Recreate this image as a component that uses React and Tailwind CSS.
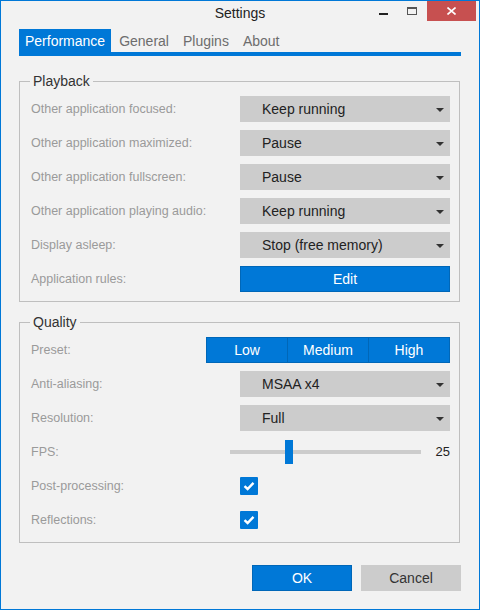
import React, { useState } from 'react';

const font = { fontFamily: '"Liberation Sans", Arial, sans-serif' };

const Dropdown = ({ value }) => (
  <div className="w-[210px] h-[26px] bg-[#cccccc] flex items-center pl-[22px] pr-[6px] text-[14px] text-[#222]">
    <span className="flex-1">{value}</span>
    <svg width="8" height="4" viewBox="0 0 8 4" className="mt-[1px]">
      <path d="M0 0h8L4 4z" fill="#333" />
    </svg>
  </div>
);

const Row = ({ label, children }) => (
  <div className="flex items-center h-[26px]">
    <span className="flex-1 text-[12.5px] text-[#9a9a9a]">{label}</span>
    {children}
  </div>
);

const Checkbox = () => (
  <div className="w-[210px] flex">
    <div className="w-[18px] h-[18px] bg-[#0078d7] rounded-[1px] flex items-center justify-center">
      <svg width="12" height="10" viewBox="0 0 12 10">
        <path d="M1.5 5.2L4.6 8L10.5 1.8" fill="none" stroke="#fff" strokeWidth="2.4" />
      </svg>
    </div>
  </div>
);

const Group = ({ title, children }) => (
  <fieldset className="border border-[#bfbfbf] mr-[1px] pl-[11px] pr-[9px] pt-[7px] pb-[9px]">
    <legend className="ml-[-1px] px-[3px] text-[14px] leading-[16px] text-[#333]">{title}</legend>
    <div className="flex flex-col gap-[8px]">{children}</div>
  </fieldset>
);

const App = () => {
  const [tab, setTab] = useState('Performance');
  const tabs = ['Performance', 'General', 'Plugins', 'About'];

  return (
    <div style={font} className="w-[480px] h-[610px] border border-[#0078d7] bg-[#f2f2f2] flex flex-col">
      {/* title bar */}
      <div className="grid grid-cols-[1fr_auto_1fr] h-[28px]">
        <div />
        <div className="pt-[4px] text-[14px] leading-[16px] text-[#222]">Settings</div>
        <div className="flex justify-end items-start pr-[3px]">
          <div className="w-[29px] h-[20px] flex justify-center">
            <div className="w-[9px] h-[2px] bg-[#222] mt-[12px] ml-[-1px]" />
          </div>
          <div className="w-[29px] h-[20px] flex justify-center">
            <div className="w-[10px] h-[8px] border border-[#555] border-t-2 mt-[6px] ml-[-2px]" />
          </div>
          <div className="w-[49px] h-[20px] bg-[#c75050] flex items-center justify-center">
            <svg width="9" height="8" viewBox="0 0 9 8">
              <path d="M0.5 0.5L8.5 7.5M8.5 0.5L0.5 7.5" stroke="#fff" strokeWidth="1.6" />
            </svg>
          </div>
        </div>
      </div>

      <div className="flex-1 flex flex-col pl-[18px] pr-[18px]">
        {/* tabs */}
        <div className="flex gap-[2px] h-[23px]">
          {tabs.map((t) => (
            <button
              key={t}
              onClick={() => setTab(t)}
              className={
                t === tab
                  ? 'px-[6px] pt-[1px] text-[14px] bg-[#0078d7] text-white'
                  : 'px-[6px] pt-[1px] text-[14px] text-[#6d6d6d]'
              }
            >
              {t}
            </button>
          ))}
        </div>
        <div className="h-[4px] bg-[#0078d7]" />

        <div className="mt-[17px]">
          <Group title="Playback">
            <Row label="Other application focused:"><Dropdown value="Keep running" /></Row>
            <Row label="Other application maximized:"><Dropdown value="Pause" /></Row>
            <Row label="Other application fullscreen:"><Dropdown value="Pause" /></Row>
            <Row label="Other application playing audio:"><Dropdown value="Keep running" /></Row>
            <Row label="Display asleep:"><Dropdown value="Stop (free memory)" /></Row>
            <Row label="Application rules:">
              <button className="w-[210px] h-[26px] bg-[#0078d7] border border-[#0067b8] text-white text-[14px]">Edit</button>
            </Row>
          </Group>
        </div>

        <div className="mt-[12px]">
          <Group title="Quality">
            <Row label="Preset:">
              <div className="w-[244px] h-[26px] flex bg-[#0078d7] border border-[#0067b8] text-white text-[14px]">
                <div className="flex-1 flex items-center justify-center">Low</div>
                <div className="flex-1 flex items-center justify-center border-l border-[#0067b8]">Medium</div>
                <div className="flex-1 flex items-center justify-center border-l border-[#0067b8]">High</div>
              </div>
            </Row>
            <Row label="Anti-aliasing:"><Dropdown value="MSAA x4" /></Row>
            <Row label="Resolution:"><Dropdown value="Full" /></Row>
            <Row label="FPS:">
              <div className="w-[191px] h-[4px] bg-[#cccccc] relative">
                <div className="absolute left-[55px] top-[-10px] w-[8px] h-[24px] bg-[#0078d7]" />
              </div>
              <span className="w-[29px] text-right text-[13px] text-[#222]">25</span>
            </Row>
            <Row label="Post-processing:"><Checkbox /></Row>
            <Row label="Reflections:"><Checkbox /></Row>
          </Group>
        </div>

        <div className="flex justify-end gap-[9px] mt-[22px]">
          <button className="w-[100px] h-[26px] bg-[#0078d7] border border-[#0067b8] text-white text-[14px]">OK</button>
          <button className="w-[100px] h-[26px] bg-[#cccccc] text-[#333] text-[14px]">Cancel</button>
        </div>
      </div>
    </div>
  );
};

export default App;
